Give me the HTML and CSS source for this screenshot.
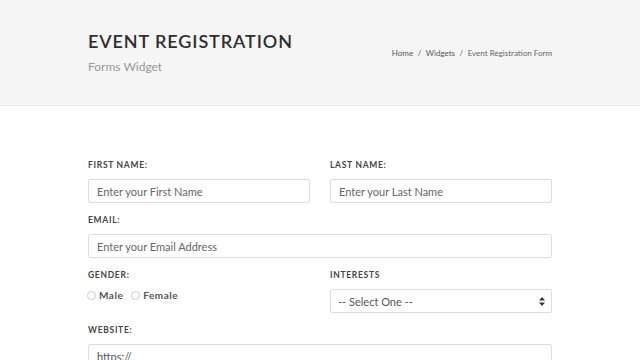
FILE: index.html
```html
<!DOCTYPE html>
<html>
<head>
<meta charset="utf-8">
<link rel="stylesheet" href="styles.css">
</head>
<body>
<header class="page-title">
  <div class="container title-row">
    <div class="title-block">
      <h1>EVENT REGISTRATION</h1>
      <span class="subtitle">Forms Widget</span>
    </div>
    <ol class="breadcrumb">
      <li><a href="#">Home</a></li>
      <li class="sep">/</li>
      <li><a href="#">Widgets</a></li>
      <li class="sep">/</li>
      <li class="active">Event Registration Form</li>
    </ol>
  </div>
</header>
<section class="content">
  <form class="container form">
    <div class="row">
      <div class="field">
        <label>FIRST NAME:</label>
        <input type="text" placeholder="Enter your First Name">
      </div>
      <div class="field">
        <label>LAST NAME:</label>
        <input type="text" placeholder="Enter your Last Name">
      </div>
    </div>
    <div class="row">
      <div class="field">
        <label>EMAIL:</label>
        <input type="text" placeholder="Enter your Email Address">
      </div>
    </div>
    <div class="row">
      <div class="field">
        <label>GENDER:</label>
        <div class="radios">
          <span class="radio"><span class="circle"></span>Male</span>
          <span class="radio"><span class="circle"></span>Female</span>
        </div>
      </div>
      <div class="field">
        <label>INTERESTS</label>
        <div class="select">
          <span>-- Select One --</span>
          <svg width="6" height="9" viewBox="0 0 6 9"><path d="M3 0L6 3.5H0Z M3 9L0 5.5H6Z" fill="#333"/></svg>
        </div>
      </div>
    </div>
    <div class="row">
      <div class="field">
        <label>WEBSITE:</label>
        <input type="text" value="https://">
      </div>
    </div>
  </form>
</section>
</body>
</html>
```
FILE: styles.css
```css
* { box-sizing: border-box; }
html, body { margin: 0; padding: 0; background: #fff; }
body { font-family: Lato, "Open Sans", sans-serif; color: #444; }
.container { width: 464px; margin-left: 88px; }
.page-title {
  background: #f5f5f5;
  border-bottom: 1px solid #e8e8e8;
  height: 106px;
  padding-top: 29px;
}
.title-row { display: flex; justify-content: space-between; align-items: center; }
.title-block { display: flex; flex-direction: column; }
h1 {
  margin: 0;
  font-family: Lato, sans-serif;
  font-weight: 600;
  font-size: 18px;
  letter-spacing: 0.9px;
  line-height: 24px;
  color: #2f2f2f;
}
.subtitle { margin-top: 6px; font-size: 12px; color: #999; line-height: 15px; }
.breadcrumb {
  list-style: none; margin: 0; padding: 0;
  display: flex; gap: 4.5px;
  font-size: 8px; color: #555;
  margin-top: 2px;
}
.breadcrumb a { color: #555; text-decoration: none; }
.breadcrumb .active { color: #666; }
.content { padding-top: 54px; }
.form { display: flex; flex-direction: column; gap: 12px; }
.row { display: flex; gap: 20px; }
.field { flex: 1; display: flex; flex-direction: column; }
label {
  font-size: 8.5px; font-weight: 700; letter-spacing: 0.7px;
  color: #444; line-height: 11px; margin-bottom: 8px;
}
input, .select {
  height: 24px; width: 100%;
  border: 1px solid #ddd; border-radius: 2px;
  padding: 0 8px;
  font-family: Lato, sans-serif; font-size: 11px; color: #555;
  background: #fff;
}
input::placeholder { color: #666; }
.select { display: flex; align-items: center; justify-content: space-between; padding: 0 6px 0 7px; }
.radios { display: flex; gap: 8px; font-size: 10px; font-weight: 700; color: #555; letter-spacing: 0.5px; margin-left: -1px; }
.radio { display: flex; align-items: center; gap: 3px; }
.circle { width: 9px; height: 9px; border: 1px solid #ccc; border-radius: 50%; }
```
